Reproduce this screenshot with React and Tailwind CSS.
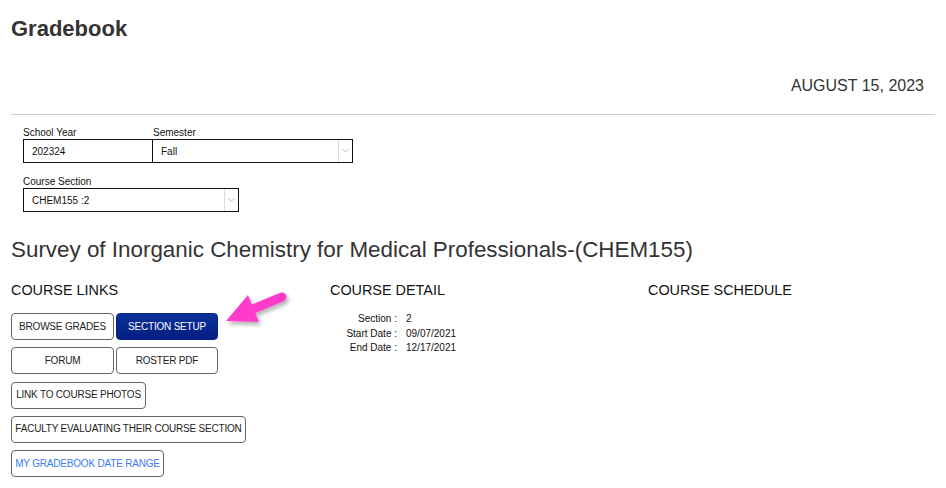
const font = { fontFamily: '"Liberation Sans", Arial, sans-serif' };

function Chevron() {
  return (
    <div className="flex h-full w-[14px] items-center justify-center border-l border-[#ddd]">
      <svg width="7" height="4" viewBox="0 0 7 4" fill="none">
        <path d="M0.5 0.5 L3.5 3 L6.5 0.5" stroke="#bbb" strokeWidth="1" />
      </svg>
    </div>
  );
}

function LinkButton({ children, color = "text-[#222]", width }) {
  return (
    <button
      className={`h-[27px] whitespace-nowrap rounded-[4px] border border-[#666] bg-white px-[3px] text-[10px] leading-none tracking-[-0.2px] ${color} ${width}`}
    >
      {children}
    </button>
  );
}

function PinkArrow() {
  return (
    <svg
      className="pointer-events-none absolute left-[220px] top-[288px]"
      width="72"
      height="44"
      viewBox="0 0 72 44"
    >
      <defs>
        <filter id="shadow" x="-20%" y="-20%" width="150%" height="160%">
          <feDropShadow dx="2" dy="3" stdDeviation="2" floodColor="#000" floodOpacity="0.3" />
        </filter>
      </defs>
      <g filter="url(#shadow)">
        <line x1="33" y1="21" x2="62" y2="9" stroke="#ff3bcb" strokeWidth="9" strokeLinecap="round" />
        <polygon points="6,33 28,7 39,34" fill="#ff3bcb" />
      </g>
    </svg>
  );
}

function App() {
  return (
    <div className="relative min-h-[488px] bg-white px-[11px] pt-[14px] text-[#333]" style={font}>
      <h1 className="text-[22px] font-bold leading-[30px] text-[#333]">Gradebook</h1>

      <div className="mt-[32px] pr-[11px] text-right text-[16px] leading-[20px] text-[#333]">
        AUGUST 15, 2023
      </div>

      <div className="mt-[18px] border-t border-[#ccc]" />

      <div className="pl-[12px]">
        <div className="mt-[12px] flex">
          <div className="w-[130px]">
            <div className="text-[10px] leading-[12px] text-[#111]">School Year</div>
            <div className="flex h-[24px] items-center border border-[#111] pl-[8px] text-[10px] text-[#111]">
              202324
            </div>
          </div>
          <div className="w-[200px]">
            <div className="text-[10px] leading-[12px] text-[#111]">Semester</div>
            <div className="flex h-[24px] items-center border border-l-0 border-[#111] text-[10px] text-[#111]">
              <span className="flex-1 pl-[8px]">Fall</span>
              <Chevron />
            </div>
          </div>
        </div>

        <div className="mt-[13px] w-[216px]">
          <div className="text-[10px] leading-[12px] text-[#111]">Course Section</div>
          <div className="flex h-[24px] items-center border border-[#111] text-[10px] text-[#111]">
            <span className="flex-1 pl-[8px]">CHEM155 :2</span>
            <Chevron />
          </div>
        </div>
      </div>

      <h2 className="mt-[25px] text-[22.4px] leading-[26px] text-[#333]">
        Survey of Inorganic Chemistry for Medical Professionals-(CHEM155)
      </h2>

      <div className="mt-[18px] grid grid-cols-[319px_318px_1fr]">
        <div>
          <h3 className="text-[14.4px] leading-[18px] text-[#111]">COURSE LINKS</h3>
          <div className="mt-[14px] flex flex-col items-start gap-[7.3px]">
            <div className="flex gap-[2px]">
              <LinkButton width="w-[103px]">BROWSE GRADES</LinkButton>
              <button className="h-[27px] w-[102px] whitespace-nowrap rounded-[4px] border border-[#0a1f88] bg-gradient-to-b from-[#0b3299] to-[#041d82] text-[10px] leading-none tracking-[-0.2px] text-white">
                SECTION SETUP
              </button>
            </div>
            <div className="flex gap-[2px]">
              <LinkButton width="w-[103px]">FORUM</LinkButton>
              <LinkButton width="w-[102px]">ROSTER PDF</LinkButton>
            </div>
            <LinkButton width="w-[135px]">LINK TO COURSE PHOTOS</LinkButton>
            <LinkButton width="w-[235px]">FACULTY EVALUATING THEIR COURSE SECTION</LinkButton>
            <LinkButton width="w-[153px]" color="text-[#3a7bf2]">
              MY GRADEBOOK DATE RANGE
            </LinkButton>
          </div>
        </div>

        <div>
          <h3 className="text-[14.4px] leading-[18px] text-[#111]">COURSE DETAIL</h3>
          <div className="mt-[13px] grid grid-cols-[67px_1fr] gap-x-[9px] text-[10px] leading-[14.5px] text-[#111]">
            <span className="text-right">Section :</span>
            <span>2</span>
            <span className="text-right">Start Date :</span>
            <span>09/07/2021</span>
            <span className="text-right">End Date :</span>
            <span>12/17/2021</span>
          </div>
        </div>

        <div>
          <h3 className="text-[14.4px] leading-[18px] text-[#111]">COURSE SCHEDULE</h3>
        </div>
      </div>

      <PinkArrow />
    </div>
  );
}

export default App;
